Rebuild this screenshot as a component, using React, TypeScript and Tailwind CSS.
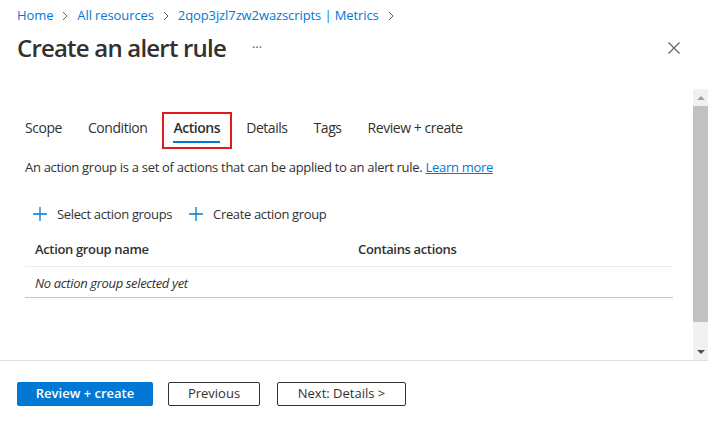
import React from 'react';

const font = { fontFamily: '"Segoe UI", "Open Sans", "Noto Sans", sans-serif' };

const Chevron = () => (
  <svg width="8" height="10" viewBox="0 0 8 10" className="mx-[8px] text-[#605e5c]">
    <path d="M2 1l4 4-4 4" fill="none" stroke="currentColor" strokeWidth="1" />
  </svg>
);

const Plus = ({ className = '' }: { className?: string }) => (
  <svg width="14" height="14" viewBox="0 0 14 14" className={`text-[#0078d4] ${className}`}>
    <path d="M7 0v14M0 7h14" stroke="currentColor" strokeWidth="1.3" />
  </svg>
);

const tabs = ['Scope', 'Condition', 'Actions', 'Details', 'Tags', 'Review + create'];

export default function App() {
  return (
    <div className="w-[708px] h-[423px] bg-white text-[#323130] flex flex-col overflow-hidden" style={font}>
      {/* header */}
      <div className="px-[17px] pt-[6px]">
        <div className="flex items-center text-[13px] tracking-[-0.1px] text-[#0078d4] h-[20px]">
          <span>Home</span>
          <Chevron />
          <span>All resources</span>
          <Chevron />
          <span>2qop3jzl7zw2wazscripts | Metrics</span>
          <Chevron />
        </div>
        <div className="flex items-center h-[44px]">
          <h1 className="text-[24px] font-semibold tracking-[-0.8px] text-[#323130]">Create an alert rule</h1>
          <span className="ml-[26px] text-[13px] text-[#605e5c]">···</span>
          <svg width="12" height="12" viewBox="0 0 12 12" className="ml-auto mr-[11px] text-[#605e5c]">
            <path d="M0.5 0.5l11 11M11.5 0.5l-11 11" stroke="currentColor" strokeWidth="1.1" />
          </svg>
        </div>
      </div>

      {/* scroll area */}
      <div className="flex flex-1 mt-[19px] border-b border-[#e1dfdd]">
        <div className="flex-1 pl-[25px] pr-[20px]">
          <div className="flex items-end gap-[26px] pt-[28px] text-[14px] tracking-[-0.45px]">
            {tabs.map((t) =>
              t === 'Actions' ? (
                <div key={t} className="relative">
                  <span className="font-semibold">{t}</span>
                  <div className="h-[2px] bg-[#0078d4] mt-[3px]" />
                  <div className="absolute -left-[11px] -right-[12px] -top-[5px] -bottom-[6px] border-2 border-[#e31a1c]" />
                </div>
              ) : (
                <div key={t}>
                  <span>{t}</span>
                  <div className="h-[2px] mt-[3px]" />
                </div>
              )
            )}
          </div>
          <p className="mt-[15px] text-[13px] tracking-[-0.3px]">
            An action group is a set of actions that can be applied to an alert rule.{' '}
            <span className="text-[#0078d4] underline">Learn more</span>
          </p>

          <div className="flex items-center mt-[27px] ml-[8px] text-[13px] tracking-[-0.35px] gap-[10px]">
            <Plus />
            <span>Select action groups</span>
            <Plus className="ml-[7px]" />
            <span>Create action group</span>
          </div>

          <div className="mt-[10px] w-[648px] text-[13px] tracking-[-0.35px]">
            <div className="flex h-[33px] items-center border-b border-[#edebe9] font-semibold px-[10px]">
              <span className="w-[323px]">Action group name</span>
              <span>Contains actions</span>
            </div>
            <div className="flex h-[31px] items-center pt-[3px] border-b border-[#c8c6c4] px-[10px] italic">
              No action group selected yet
            </div>
          </div>
        </div>

        {/* scrollbar */}
        <div className="w-[15px] bg-[#f1f1f1] flex flex-col items-center">
          <div className="h-[17px] flex items-center justify-center">
            <div className="w-0 h-0 border-l-[4px] border-r-[4px] border-b-[4px] border-l-transparent border-r-transparent border-b-[#a3a3a3]" />
          </div>
          <div className="w-full h-[216px] bg-[#c1c1c1]" />
          <div className="flex-1" />
          <div className="h-[17px] flex items-center justify-center">
            <div className="w-0 h-0 border-l-[4px] border-r-[4px] border-t-[4px] border-l-transparent border-r-transparent border-t-[#505050]" />
          </div>
        </div>
      </div>

      {/* footer */}
      <div className="flex items-start gap-[15px] px-[17px] pt-[21px] h-[62px] text-[13px]">
        <button className="w-[136px] h-[24px] bg-[#0078d4] text-white font-semibold rounded-[2px]">
          Review + create
        </button>
        <button className="w-[92px] h-[24px] border border-[#323130] rounded-[2px]">Previous</button>
        <button className="w-[129px] h-[24px] border border-[#323130] rounded-[2px] ml-[2px]">
          Next: Details &gt;
        </button>
      </div>
    </div>
  );
}
